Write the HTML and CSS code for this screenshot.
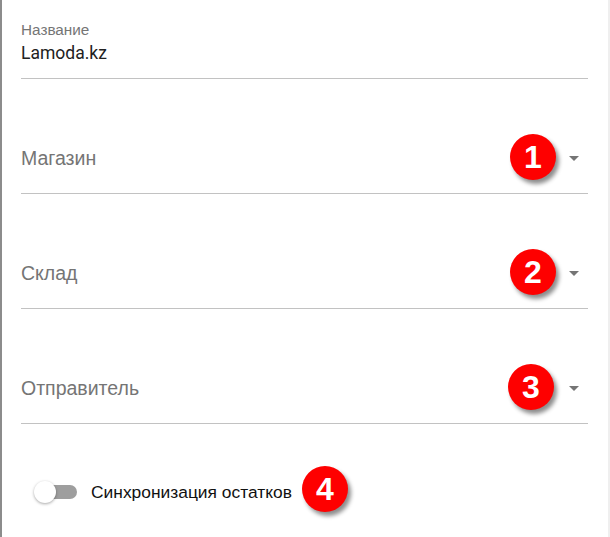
FILE: index.html
```html
<!DOCTYPE html>
<html>
    <head>
        <title>Интеграция</title>
        <link rel="stylesheet" href="styles.css">
    </head>
    <body>
        <div class="panel">
            <div class="panel-mark"></div>
            <div class="field text-field">
                <label class="field-label">Название</label>
                <div class="field-value">Lamoda.kz</div>
            </div>
            <div class="field select-field">
                <span class="placeholder">Магазин</span>
                <span class="arrow"></span>
                <span class="badge">1</span>
            </div>
            <div class="field select-field">
                <span class="placeholder">Склад</span>
                <span class="arrow"></span>
                <span class="badge">2</span>
            </div>
            <div class="field select-field">
                <span class="placeholder">Отправитель</span>
                <span class="arrow"></span>
                <span class="badge badge-3">3</span>
            </div>
            <div class="switch-row">
                <span class="switch">
                    <span class="switch-track"></span>
                    <span class="switch-thumb"></span>
                </span>
                <span class="switch-label">Синхронизация остатков</span>
                <span class="badge badge-inline">4</span>
            </div>
        </div>
    </body>
</html>
```

FILE: styles.css
```css
body {
    margin: 0;
    padding: 0;
    font-family: "Liberation Sans", Arial, sans-serif;
    background: #fff;
}
.panel {
    position: relative;
    box-sizing: border-box;
    width: 610px;
    height: 537px;
    border-left: 2px solid #8c8c8c;
    border-right: 2px solid #efefef;
    padding: 0 20px 0 19px;
    overflow: hidden;
}
.panel-mark {
    position: absolute;
    left: -2px;
    top: 18px;
    width: 2px;
    height: 44px;
    background: #0b4f8c;
}
.field {
    position: relative;
    border-bottom: 1px solid #c2c2c2;
}
.text-field {
    padding-top: 21px;
    padding-bottom: 14px;
}
.field-label {
    display: block;
    font-size: 15.3px;
    line-height: 18px;
    color: #757575;
}
.field-value {
    margin-top: 3px;
    font-family: Roboto, "Liberation Sans", Arial, sans-serif;
    font-size: 17.5px;
    line-height: 22px;
    color: #212121;
}
.select-field {
    height: 115px;
    display: flex;
    align-items: flex-end;
    padding-bottom: 23px;
    box-sizing: border-box;
}
.placeholder {
    flex: 1;
    font-size: 19.5px;
    line-height: 24px;
    color: #757575;
}
.arrow {
    width: 0;
    height: 0;
    margin: 0 9px 9px 0;
    border-left: 5px solid transparent;
    border-right: 5px solid transparent;
    border-top: 5px solid #757575;
}
.badge {
    position: absolute;
    right: 32px;
    top: 55px;
    width: 46px;
    height: 46px;
    border-radius: 50%;
    background: #fe0000;
    color: #fff;
    font-family: "Liberation Sans", Arial, sans-serif;
    font-weight: bold;
    font-size: 32px;
    line-height: 46px;
    text-align: center;
    box-shadow: 3px 4px 4px rgba(0, 0, 0, 0.45);
}
.badge-3 {
    right: 34px;
}
.switch-row {
    display: flex;
    align-items: center;
    height: 134px;
    padding-left: 13px;
    padding-top: 2px;
    box-sizing: border-box;
}
.switch {
    position: relative;
    width: 44px;
    height: 24px;
    flex: none;
}
.switch-track {
    position: absolute;
    left: 7px;
    top: 5px;
    width: 36px;
    height: 14px;
    border-radius: 7px;
    background: #9e9e9e;
}
.switch-thumb {
    position: absolute;
    left: 0;
    top: 1px;
    width: 22px;
    height: 22px;
    border-radius: 50%;
    background: #fff;
    box-shadow: 0 1px 3px rgba(0, 0, 0, 0.35);
}
.switch-label {
    margin-left: 13px;
    font-size: 17.4px;
    color: #111;
}
.badge-inline {
    position: static;
    margin-left: 10px;
    margin-bottom: 6px;
    flex: none;
}
```
